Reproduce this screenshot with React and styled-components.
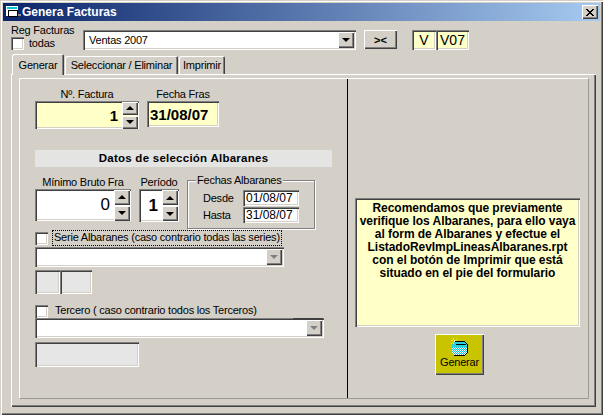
import React from 'react';
import styled, { createGlobalStyle } from 'styled-components';

const GlobalStyle = createGlobalStyle`
html, body {
  margin: 0;
  padding: 0;
  background: #d4d0c8;
}
* {
  box-sizing: border-box;
}
`;

const raised = `box-shadow: inset 1px 1px 0 #fff, inset -1px -1px 0 #404040, inset -2px -2px 0 #808080;`;
const sunken = `box-shadow: inset 1px 1px 0 #808080, inset 2px 2px 0 #404040, inset -1px -1px 0 #fff, inset -2px -2px 0 #d4d0c8;`;

const Ventana = styled.div`
width: 603px;
height: 415px;
padding: 3px;
background: #d4d0c8;
font-family: 'Liberation Sans', Arial, sans-serif;
font-size: 11px;
letter-spacing: -0.22px;
color: #000;
overflow: hidden;
box-shadow: inset 1px 1px 0 #d4d0c8, inset 2px 2px 0 #fff, inset -1px -1px 0 #404040, inset -2px -2px 0 #808080;
`;

const BarraTitulo = styled.div`
display: flex;
align-items: center;
height: 18px;
padding: 0 2px 0 3px;
background: linear-gradient(90deg, #0a246a, #a6caf0);
color: #fff;
font-weight: 700;
font-size: 12px;
letter-spacing: 0;
`;

const TituloTexto = styled.span`
margin-left: 1px;
flex: 1;
`;

const BotonCerrar = styled.div`
display: flex;
align-items: center;
justify-content: center;
width: 16px;
height: 14px;
background: #d4d0c8;
${raised}
`;

const FilaSuperior = styled.div`
display: flex;
align-items: flex-start;
height: 33px;
padding-left: 8px;
`;

const BloqueReg = styled.div`
width: 72px;
padding-top: 3px;
line-height: 13px;
`;

const FilaCheck = styled.div`
display: flex;
align-items: center;
height: ${p => p.$h || 14}px;
margin-top: ${p => p.$mt || 0}px;
gap: ${p => p.$gap || 5}px;
`;

const Check = styled.div`
width: 13px;
height: 13px;
flex: none;
background: #fff;
${sunken}
`;

const Combo = styled.div`
position: relative;
display: flex;
justify-content: flex-end;
align-items: center;
flex: none;
width: ${p => p.$w}px;
height: 20px;
margin-top: ${p => p.$mt || 0}px;
padding-right: 2px;
background: #fff;
${sunken}
`;

const ComboTexto = styled.span`
flex: 1;
padding-left: 6px;
`;

const ComboBoton = styled.div`
display: flex;
align-items: center;
justify-content: center;
width: 16px;
height: 16px;
background: #d4d0c8;
${raised}
`;

const Muesca = styled.div`
position: absolute;
top: 0;
right: 1px;
width: 30px;
height: 1px;
background: #404040;
`;

const Flecha = styled.div`
width: 0;
height: 0;
border-left: ${p => p.$s || 4}px solid transparent;
border-right: ${p => p.$s || 4}px solid transparent;
${p => (p.$up ? 'border-bottom' : 'border-top')}: ${p => p.$s || 4}px solid ${p => p.$color || '#000'};
`;

const BotonCambio = styled.div`
display: flex;
align-items: center;
justify-content: center;
width: 33px;
height: 19px;
margin: 9px 0 0 8px;
background: #d4d0c8;
font-weight: 700;
font-size: 11px;
letter-spacing: 0;
${raised}
`;

const CajaSerie = styled.div`
display: flex;
align-items: center;
justify-content: center;
width: ${p => p.$w}px;
height: 20px;
margin: 9px 0 0 ${p => p.$ml || 0}px;
background: #ffffc8;
font-size: 14px;
letter-spacing: 0;
${sunken}
`;

const Pestanas = styled.div`
position: relative;
display: flex;
align-items: flex-end;
gap: 1px;
height: 20px;
padding-left: 9px;
`;

const Pestana = styled.div`
position: relative;
display: flex;
align-items: center;
justify-content: center;
width: ${p => p.$w}px;
height: ${p => (p.$active ? 21 : 18)}px;
margin-bottom: ${p => (p.$active ? -1 : 0)}px;
z-index: ${p => (p.$active ? 2 : 0)};
background: #d4d0c8;
border-radius: 2px 2px 0 0;
box-shadow: inset 1px 1px 0 #fff, inset -1px 0 0 #404040, inset -2px 0 0 #808080;
`;

const MarcoExterior = styled.div`
margin-left: 8px;
width: 585px;
height: 333px;
padding: 4px 7px 7px 8px;
box-shadow: inset 1px 1px 0 #fff, inset -1px -1px 0 #404040, inset -2px -2px 0 #808080;
`;

const MarcoInterior = styled.div`
display: flex;
height: 321px;
border-top: 1px solid #fff;
border-left: 1px solid #fff;
border-right: 1px solid #9c9a94;
border-bottom: 1px solid #9c9a94;
`;

const PanelIzquierdo = styled.div`
width: 328px;
flex: none;
padding: 9px 0 0 15px;
border-right: 1px solid #000;
`;

const PanelDerecho = styled.div`
flex: 1;
padding: 119px 0 0 7px;
`;

const Fila = styled.div`
display: flex;
align-items: flex-start;
gap: 8px;
`;

const Columna = styled.div`
display: flex;
flex-direction: column;
align-items: center;
width: ${p => p.$w}px;
`;

const Etiqueta = styled.div`
height: 13px;
line-height: 12px;
white-space: nowrap;
`;

const Campo = styled.div`
display: flex;
align-items: center;
justify-content: flex-end;
width: ${p => p.$w}px;
height: ${p => p.$h}px;
padding-right: 1px;
background: ${p => p.$bg || '#fff'};
font-weight: ${p => (p.$bold ? 700 : 400)};
font-size: ${p => p.$fs || 12}px;
letter-spacing: 0;
${sunken}
`;

const ValorCampo = styled.span`
flex: 1;
text-align: ${p => p.$align || 'right'};
padding: 0 ${p => (p.$align ? 0 : 4)}px 0 ${p => (p.$align ? 3 : 0)}px;
`;

const Spinner = styled.div`
display: flex;
flex-direction: column;
justify-content: center;
gap: 1px;
flex: none;
width: 16px;
`;

const SpinBoton = styled.div`
display: flex;
align-items: center;
justify-content: center;
height: ${p => p.$h || 13}px;
background: #d4d0c8;
${raised}
`;

const TituloSeccion = styled.div`
width: 297px;
height: 17px;
margin-top: 21px;
background: #e4e4e2;
text-align: center;
font-weight: 700;
font-size: 11.5px;
line-height: 17px;
letter-spacing: 0.25px;
`;

const FilaAlbaranes = styled(Fila)`
height: 53px;
margin-top: 9px;
`;

const GrupoFechas = styled.div`
position: relative;
width: 128px;
height: 49px;
margin-top: 4px;
padding: 9px 0 0 15px;
border: 1px solid #808080;
box-shadow: 1px 1px 0 #fff, inset 1px 1px 0 #fff;
`;

const Leyenda = styled.div`
position: absolute;
top: -7px;
left: 8px;
padding: 0 1px;
background: #d4d0c8;
white-space: nowrap;
`;

const FilaFecha = styled.div`
display: flex;
align-items: center;
margin-bottom: 1px;
`;

const EtiquetaFecha = styled.div`
width: 40px;
`;

const FechaCampo = styled.div`
display: flex;
align-items: center;
width: 56px;
height: 16px;
padding-left: 3px;
background: #fff;
font-size: 12px;
letter-spacing: 0;
${sunken}
`;

const EtiquetaFoco = styled.span`
height: 14px;
line-height: 13px;
white-space: nowrap;
padding: 0 1px;
outline: ${p => (p.$focus ? '1px dotted #000' : 'none')};
`;

const CajasDeshabilitadas = styled.div`
display: flex;
margin-top: ${p => p.$mt}px;
`;

const Deshabilitada = styled.div`
width: ${p => p.$w}px;
height: ${p => p.$h}px;
background: #e6e6e6;
${sunken}
`;

const Nota = styled.div`
width: 225px;
height: 129px;
padding-top: 4px;
background: #ffffc8;
text-align: center;
font-weight: 700;
font-size: 12px;
line-height: 13px;
letter-spacing: -0.05px;
white-space: nowrap;
${sunken}
`;

const BotonGenerar = styled.div`
display: flex;
flex-direction: column;
align-items: center;
width: 49px;
height: 41px;
margin: 7px 0 0 80px;
padding-top: 4px;
background: #c8c400;
line-height: 12px;
${raised}
`;

const IconoVentana = () => (
  <svg width="15" height="12" viewBox="0 0 15 12" shapeRendering="crispEdges">
    <rect x="0" y="0" width="12" height="10" fill="#fff" />
    <rect x="1" y="1" width="10" height="2" fill="#00c8d8" />
    <rect x="2.5" y="4.5" width="9" height="6" fill="#fff" stroke="#000" strokeWidth="1" />
    <rect x="12" y="8" width="3" height="2" fill="#8a8a8a" />
  </svg>
);

const IconoCerrar = () => (
  <svg width="8" height="7" viewBox="0 0 8 7" shapeRendering="crispEdges">
    <path d="M0 0h2v1h-2zM6 0h2v1h-2zM1 1h2v1h-2zM5 1h2v1h-2zM2 2h4v1h-4zM3 3h2v1h-2zM2 4h4v1h-4zM1 5h2v1h-2zM5 5h2v1h-2zM0 6h2v1h-2zM6 6h2v1h-2z" fill="#000" />
  </svg>
);

const IconoGenerar = () => (
  <svg width="17" height="18" viewBox="0 0 17 18" shapeRendering="crispEdges">
    <defs>
      <pattern id="trama" width="2" height="2" patternUnits="userSpaceOnUse">
        <rect width="2" height="2" fill="#fff" />
        <rect width="1" height="1" fill="#00c8e0" />
        <rect x="1" y="1" width="1" height="1" fill="#00c8e0" />
      </pattern>
    </defs>
    <path d="M1 9h15v6l-2 2h-11l-2-2z" fill="url(#trama)" />
    <path d="M3 4h11l2 2v3h-15v-3z" fill="#28d0e0" />
    <path d="M3 3h11v1h-11zM14 4h1v1h-1zM15 5h1v1h-1zM16 6h1v9h-1zM15 15h1v1h-1zM14 16h1v1h-1zM3 17h11v1h-11z" fill="#000" />
    <rect x="5" y="6" width="10" height="1" fill="#000" />
    <path d="M2 0h1v2h-1zM0 2h2v1h-2zM4 2h2v1h-2zM2 4h1v2h-1zM5 0h1v1h-1zM0 5h1v1h-1z" fill="#f4f000" />
    <rect x="3" y="2" width="1" height="2" fill="#fff" />
  </svg>
);

const Spin = ({ h }) => (
  <Spinner>
    <SpinBoton $h={h}><Flecha $up /></SpinBoton>
    <SpinBoton $h={h}><Flecha /></SpinBoton>
  </Spinner>
);

export default function App() {
  return (
    <Ventana>
      <GlobalStyle />
      <BarraTitulo>
        <IconoVentana />
        <TituloTexto>Genera Facturas</TituloTexto>
        <BotonCerrar><IconoCerrar /></BotonCerrar>
      </BarraTitulo>

      <FilaSuperior>
        <BloqueReg>
          <div>Reg Facturas</div>
          <FilaCheck $h={13}>
            <Check />
            todas
          </FilaCheck>
        </BloqueReg>
        <Combo $w={273} $mt={9}>
          <ComboTexto>Ventas 2007</ComboTexto>
          <ComboBoton><Flecha /></ComboBoton>
        </Combo>
        <BotonCambio>&gt;&lt;</BotonCambio>
        <CajaSerie $w={24} $ml={15}>V</CajaSerie>
        <CajaSerie $w={33}>V07</CajaSerie>
      </FilaSuperior>

      <Pestanas>
        <Pestana $w={52} $active>Generar</Pestana>
        <Pestana $w={113}>Seleccionar / Eliminar</Pestana>
        <Pestana $w={46}>Imprimir</Pestana>
      </Pestanas>

      <MarcoExterior>
        <MarcoInterior>
          <PanelIzquierdo>
            <Fila>
              <Columna $w={104}>
                <Etiqueta>Nº. Factura</Etiqueta>
                <Campo $w={104} $h={28} $bg="#ffffc8" $bold $fs={15}>
                  <ValorCampo>1</ValorCampo>
                  <Spin />
                </Campo>
              </Columna>
              <Columna $w={72}>
                <Etiqueta>Fecha Fras</Etiqueta>
                <Campo $w={72} $h={26} $bg="#ffffc8" $bold $fs={15}>
                  <ValorCampo $align="left">31/08/07</ValorCampo>
                </Campo>
              </Columna>
            </Fila>

            <TituloSeccion>Datos de selección Albaranes</TituloSeccion>

            <FilaAlbaranes>
              <Columna $w={96}>
                <Etiqueta>Mínimo Bruto Fra</Etiqueta>
                <Campo $w={96} $h={32} $fs={17}>
                  <ValorCampo>0</ValorCampo>
                  <Spin h={15} />
                </Campo>
              </Columna>
              <Columna $w={40}>
                <Etiqueta>Período</Etiqueta>
                <Campo $w={40} $h={33} $bold $fs={17}>
                  <ValorCampo>1</ValorCampo>
                  <Spin h={15} />
                </Campo>
              </Columna>
              <GrupoFechas>
                <Leyenda>Fechas Albaranes</Leyenda>
                <FilaFecha>
                  <EtiquetaFecha>Desde</EtiquetaFecha>
                  <FechaCampo>01/08/07</FechaCampo>
                </FilaFecha>
                <FilaFecha>
                  <EtiquetaFecha>Hasta</EtiquetaFecha>
                  <FechaCampo>31/08/07</FechaCampo>
                </FilaFecha>
              </GrupoFechas>
            </FilaAlbaranes>

            <FilaCheck $mt={2}>
              <Check />
              <EtiquetaFoco $focus>Serie Albaranes (caso contrario todas las series)</EtiquetaFoco>
            </FilaCheck>
            <Combo $w={249} $mt={2}>
              <ComboBoton><Flecha $color="#808080" /></ComboBoton>
            </Combo>
            <CajasDeshabilitadas $mt={3}>
              <Deshabilitada $w={25} $h={24} />
              <Deshabilitada $w={32} $h={24} />
            </CajasDeshabilitadas>

            <FilaCheck $mt={10} $gap={6}>
              <Check />
              <EtiquetaFoco>Tercero ( caso contrario todos los Terceros)</EtiquetaFoco>
            </FilaCheck>
            <Combo $w={289}>
              <Muesca />
              <ComboBoton><Flecha $color="#808080" /></ComboBoton>
            </Combo>
            <CajasDeshabilitadas $mt={4}>
              <Deshabilitada $w={104} $h={25} />
            </CajasDeshabilitadas>
          </PanelIzquierdo>

          <PanelDerecho>
            <Nota>
              Recomendamos que previamente<br />
              verifique los Albaranes, para ello vaya<br />
              al form de Albaranes y efectue el<br />
              ListadoRevImpLineasAlbaranes.rpt<br />
              con el botón de Imprimir que está<br />
              situado en el pie del formulario
            </Nota>
            <BotonGenerar>
              <IconoGenerar />
              Generar
            </BotonGenerar>
          </PanelDerecho>
        </MarcoInterior>
      </MarcoExterior>
    </Ventana>
  );
}
